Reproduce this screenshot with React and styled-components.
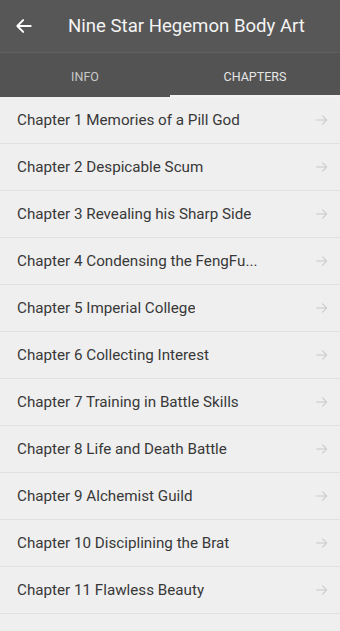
import React from "react";
import styled, { createGlobalStyle } from "styled-components";

const Global = createGlobalStyle`
  html, body { margin: 0; padding: 0; background: #efefef; }
  body { font-family: Roboto, "Noto Sans", sans-serif; }
`;

const Page = styled.div`
  width: 340px;
  min-height: 631px;
  background: #efefef;
  overflow: hidden;
`;

const AppBar = styled.header`
  background: #575757;
  height: 53px;
  display: flex;
  align-items: center;
  padding: 0 14px;
  box-sizing: border-box;
  border-bottom: 1px solid #5f5f5f;
`;

const BackBtn = styled.div`
  width: 20px;
  height: 20px;
  display: flex;
  align-items: center;
  justify-content: center;
  color: #fff;
`;

const Title = styled.h1`
  margin: 0 0 0 34px;
  font-size: 18.6px;
  font-weight: 400;
  color: #f4f4f4;
  white-space: nowrap;
`;

const Tabs = styled.nav`
  background: #535353;
  height: 44px;
  display: grid;
  grid-template-columns: 1fr 1fr;
`;

const Tab = styled.div`
  display: flex;
  align-items: center;
  justify-content: center;
  font-size: 12.5px;
  padding-top: 2px;
  color: ${p => (p.$active ? "#e6e6e6" : "#c8c8c8")};
  text-transform: uppercase;
  position: relative;
  &::after {
    content: "";
    position: absolute;
    left: 0;
    right: 0;
    bottom: 0;
    height: 2px;
    background: ${p => (p.$active ? "#f2f2f2" : "transparent")};
  }
`;

const List = styled.ul`
  list-style: none;
  margin: 0;
  padding: 0;
`;

const Row = styled.li`
  height: 46px;
  border-bottom: 1px solid #e2e2e2;
  display: flex;
  align-items: center;
  justify-content: space-between;
  padding: 0 11px 0 17px;
  box-sizing: content-box;
`;

const Label = styled.span`
  font-size: 15.2px;
  color: #383838;
  white-space: nowrap;
  overflow: hidden;
  text-overflow: ellipsis;
  max-width: 245px;
`;

const Arrow = ({ color = "#fff", size = 20 }) => (
  <svg width={size} height={size} viewBox="0 0 24 24" fill="none">
    <path d="M20 12H4M11 5l-7 7 7 7" stroke={color} strokeWidth="2.4" strokeLinecap="round" strokeLinejoin="round" />
  </svg>
);

const Chevron = () => (
  <svg width="14" height="14" viewBox="0 0 24 24" fill="none">
    <path d="M3 12h17M13 5l7 7-7 7" stroke="#c8c8c8" strokeWidth="1.8" strokeLinecap="round" strokeLinejoin="round" />
  </svg>
);

const chapters = [
  "Chapter 1 Memories of a Pill God",
  "Chapter 2 Despicable Scum",
  "Chapter 3 Revealing his Sharp Side",
  "Chapter 4 Condensing the FengFu...",
  "Chapter 5 Imperial College",
  "Chapter 6 Collecting Interest",
  "Chapter 7 Training in Battle Skills",
  "Chapter 8 Life and Death Battle",
  "Chapter 9 Alchemist Guild",
  "Chapter 10 Disciplining the Brat",
  "Chapter 11 Flawless Beauty",
];

export default function App() {
  return (
    <Page>
      <Global />
      <AppBar>
        <BackBtn><Arrow /></BackBtn>
        <Title>Nine Star Hegemon Body Art</Title>
      </AppBar>
      <Tabs>
        <Tab>Info</Tab>
        <Tab $active>Chapters</Tab>
      </Tabs>
      <List>
        {chapters.map(c => (
          <Row key={c}>
            <Label>{c}</Label>
            <Chevron />
          </Row>
        ))}
      </List>
    </Page>
  );
}
